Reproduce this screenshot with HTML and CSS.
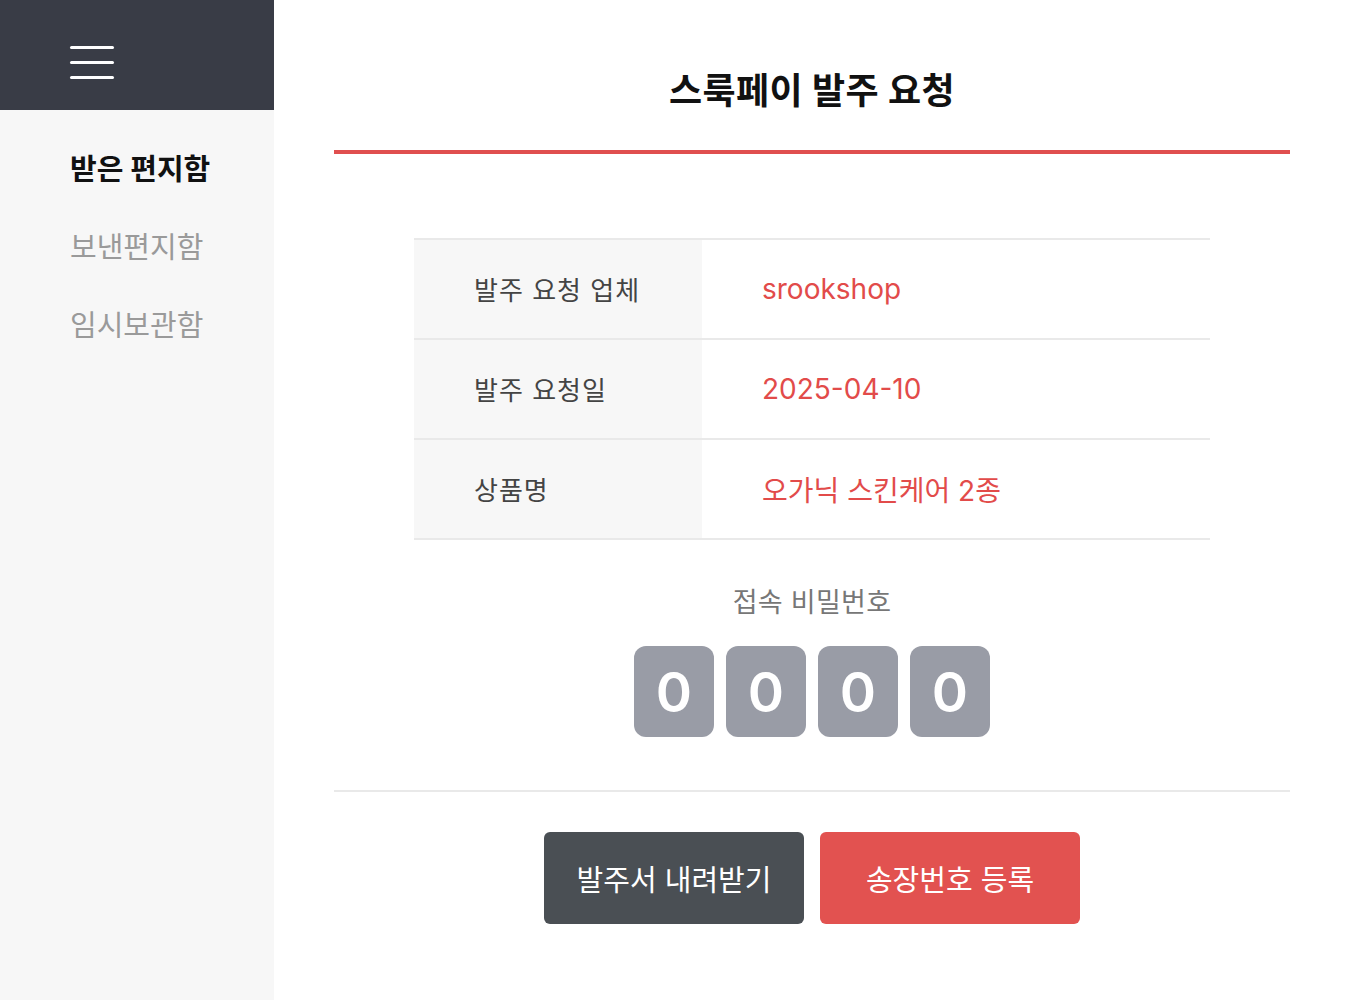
FILE: index.html
```html
<!DOCTYPE html>
<html lang="ko">
<head>
<meta charset="utf-8">
<title>스룩페이 발주 요청</title>
<link rel="stylesheet" href="styles.css">
</head>
<body>
<div class="layout">
  <aside class="sidebar">
    <div class="sidebar-top">
      <div class="hamburger"><span></span><span></span><span></span></div>
    </div>
    <nav class="nav">
      <a class="nav-item active">받은 편지함</a>
      <a class="nav-item">보낸편지함</a>
      <a class="nav-item">임시보관함</a>
    </nav>
  </aside>
  <main class="main">
    <h1 class="title">스룩페이 발주 요청</h1>
    <div class="info">
      <div class="row">
        <div class="label">발주 요청 업체</div>
        <div class="value">srookshop</div>
      </div>
      <div class="row">
        <div class="label">발주 요청일</div>
        <div class="value">2025-04-10</div>
      </div>
      <div class="row">
        <div class="label">상품명</div>
        <div class="value">오가닉 스킨케어 2종</div>
      </div>
    </div>
    <div class="pin">
      <div class="pin-label">접속 비밀번호</div>
      <div class="pin-boxes">
        <div class="pin-box">0</div>
        <div class="pin-box">0</div>
        <div class="pin-box">0</div>
        <div class="pin-box">0</div>
      </div>
    </div>
    <div class="divider"></div>
    <div class="actions">
      <button class="btn btn-dark">발주서 내려받기</button>
      <button class="btn btn-red">송장번호 등록</button>
    </div>
  </main>
</div>
</body>
</html>
```

FILE: styles.css
```css
* { box-sizing: border-box; }
html, body { margin: 0; padding: 0; background: #fff; }
body {
  font-family: Inter, "Noto Sans CJK KR", sans-serif;
  color: #222;
}
.layout { display: flex; min-height: 1000px; }

.sidebar {
  width: 274px;
  flex: 0 0 274px;
  background: #f7f7f7;
}
.sidebar-top {
  height: 110px;
  background: #393c46;
  padding: 46px 0 0 70px;
}
.hamburger { display: flex; flex-direction: column; gap: 12px; width: 44px; }
.hamburger span { display: block; height: 3px; background: #fff; border-radius: 2px; }

.nav { display: flex; flex-direction: column; padding: 21px 0 0 70px; }
.nav-item {
  height: 78px;
  line-height: 78px;
  font-size: 29px;
  letter-spacing: 0;
  color: #9a9a9a;
}
.nav-item.active { color: #111; font-weight: 700; }

.main { flex: 1; padding: 0 70px 0 60px; }
.title {
  margin: 0;
  padding: 68px 0 36px;
  line-height: 46px;
  font-size: 36px;
  font-weight: 700;
  letter-spacing: 0.4px;
  text-align: center;
  color: #111;
  border-bottom: 4px solid #e04f4f;
}

.info {
  margin: 84px 80px 0;
  border-top: 2px solid #e9e9e9;
}
.row {
  display: flex;
  height: 100px;
  border-bottom: 2px solid #e9e9e9;
}
.label {
  width: 288px;
  background: #f7f7f7;
  padding: 0 0 2px 60px;
  display: flex;
  align-items: center;
  font-size: 26px;
  letter-spacing: 1px;
  color: #444;
}
.value {
  flex: 1;
  padding-left: 60px;
  display: flex;
  align-items: center;
  font-size: 28px;
  letter-spacing: 0;
  color: #e24b4a;
}

.pin { margin-top: 47px; display: flex; flex-direction: column; align-items: center; }
.pin-label {
  line-height: 32px;
  font-size: 27px;
  letter-spacing: 0.3px;
  color: #777;
}
.pin-boxes { display: flex; gap: 12px; margin-top: 27px; }
.pin-box {
  width: 80px;
  height: 91px;
  border-radius: 12px;
  background: #999ca6;
  color: #fff;
  font-size: 55px;
  font-weight: 600;
  display: flex;
  align-items: center;
  justify-content: center;
}

.divider { height: 2px; background: #e9e9e9; margin-top: 53px; }

.actions { display: flex; justify-content: center; gap: 16px; margin-top: 40px; }
.btn {
  width: 260px;
  height: 92px;
  border: 0;
  border-radius: 6px;
  color: #fff;
  font-family: Inter, "Noto Sans CJK KR", sans-serif;
  font-size: 29px;
  letter-spacing: 0;
}
.btn-dark { background: #4a4f54; }
.btn-red { background: #e25250; }
```
